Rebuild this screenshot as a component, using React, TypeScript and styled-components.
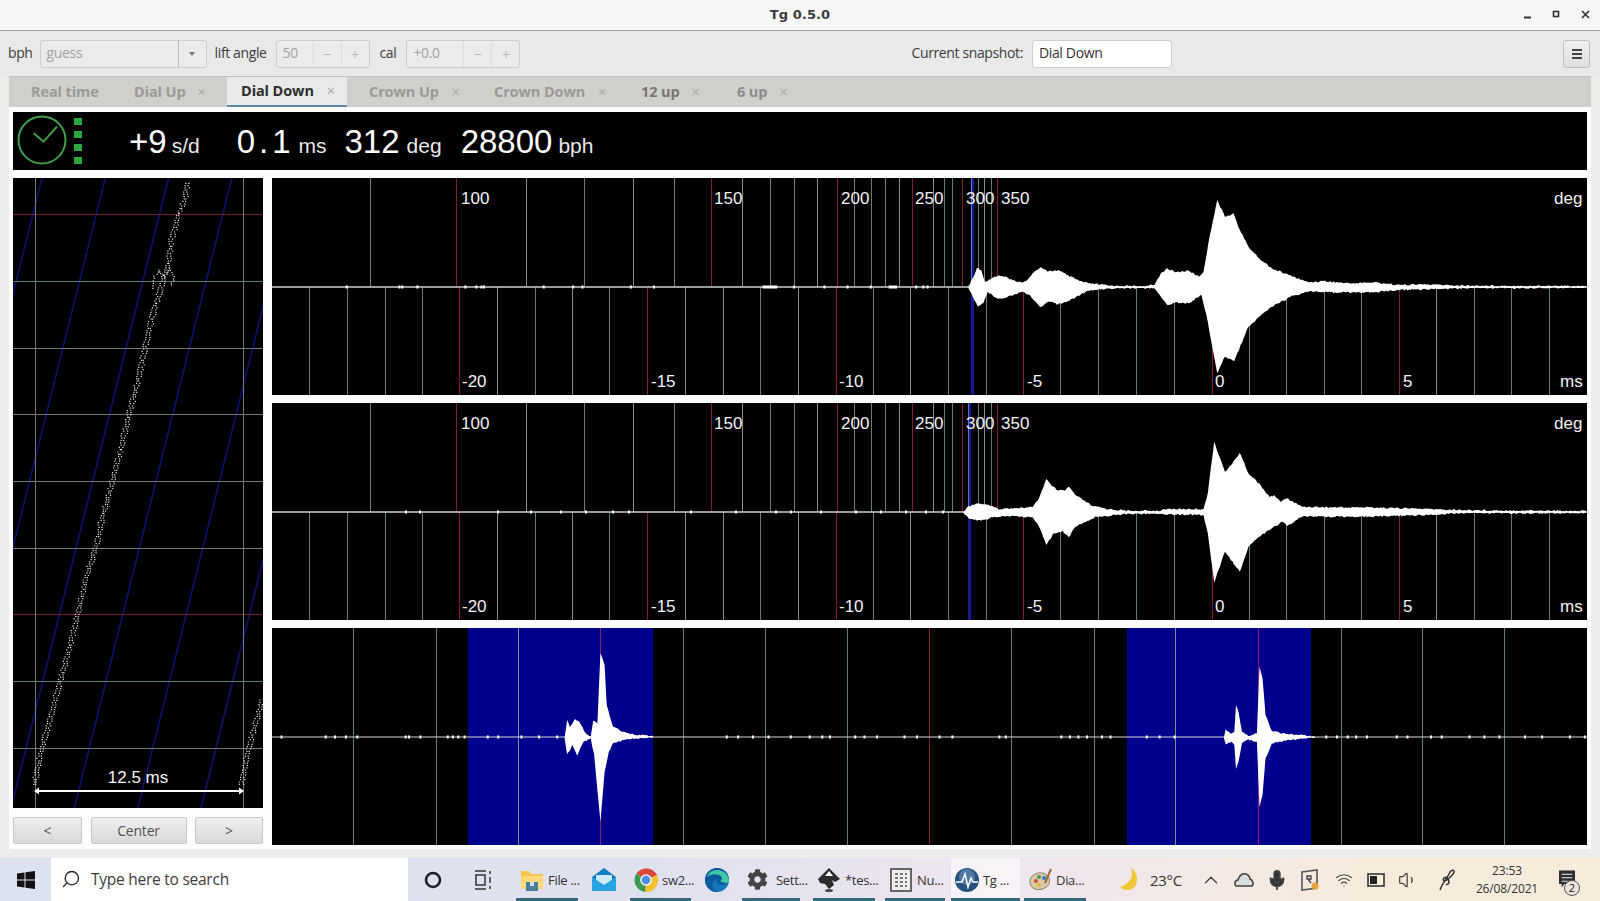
import React from 'react';
import styled, { createGlobalStyle } from 'styled-components';
import { Search, ChevronUp, Mic, Volume1, Wifi } from 'lucide-react';
import { FaCog } from 'react-icons/fa';

const Global = createGlobalStyle`
  html, body { margin: 0; padding: 0; width: 1600px; height: 901px; overflow: hidden; background: #ececec; }
  * { box-sizing: border-box; }
  #root { width: 1600px; height: 901px; }
`;

const UI = `"Open Sans", "Noto Sans", "Liberation Sans", sans-serif`;
const ARIAL = `"Liberation Sans", Arial, sans-serif`;

const Shell = styled.div`
  width: 1600px; height: 901px; display: flex; flex-direction: column;
  background: #ececec; font-family: ${UI}; overflow: hidden;
`;
const TitleBar = styled.header`
  height: 31px; flex: none; display: grid; grid-template-columns: 1fr auto 1fr; align-items: center;
  background: #f6f6f6; border-bottom: 1px solid #a3a3a3; padding-bottom: 1px;
`;
const Title = styled.div`
  grid-column: 2; font: bold 13px "DejaVu Sans", sans-serif; color: #3c3c3c; letter-spacing: .1px;
`;
const WinControls = styled.div`
  grid-column: 3; justify-self: end; display: flex; align-items: center; gap: 20px; padding-right: 10px;
`;
const WinGlyph = styled.svg`
  width: 9px; height: 9px; display: block; stroke: #333; fill: none; stroke-width: 1.6;
`;

const Toolbar = styled.div`
  height: 45px; flex: none; display: flex; align-items: center; padding: 0 10px 0 8px; background: #e9e9e9;
  font-size: 14px; color: #3d3d3d;
`;
const Label = styled.span<{ $ml?: number }>`
  margin-left: ${p => p.$ml ?? 0}px; margin-bottom: 2px; letter-spacing: -.38px; white-space: nowrap;
`;
const Spacer = styled.div`flex: 1;`;
const Control = styled.div<{ $w: number; $ml: number; $bg?: string }>`
  width: ${p => p.$w}px; height: 28px; margin-left: ${p => p.$ml}px; display: flex; align-items: stretch;
  border: 1px solid #cdcdcd; border-radius: 3px; background: ${p => p.$bg ?? '#ebebeb'};
`;
const FieldText = styled.span<{ $dim?: boolean }>`
  flex: 1; display: flex; align-items: center; padding: 0 0 2px 6px; letter-spacing: -.35px;
  color: ${p => (p.$dim ? '#a2a2a2' : '#333')};
`;
const SpinButton = styled.span`
  width: 28px; flex: none; border-left: 1px solid #dcdcdc; display: flex; align-items: center; justify-content: center;
  color: #b9b9b9; font-size: 15px;
`;
const ComboArrow = styled.span`
  width: 28px; flex: none; border-left: 1px solid #bcbcbc; display: flex; align-items: center; justify-content: center;
  &::after { content: ''; border: 3.5px solid transparent; border-top: 4px solid #777; margin-top: 4px; }
`;
const MenuButton = styled.button`
  width: 27px; height: 28px; padding: 0; display: flex; align-items: center; justify-content: center;
  border: 1px solid #c0c0c0; border-radius: 3px; background: linear-gradient(#f0f0f0, #dedede);
`;
const Bars = styled.span`
  width: 10px; height: 10px; display: block;
  border-top: 2px solid #444; border-bottom: 2px solid #444; position: relative;
  &::after { content: ''; position: absolute; left: 0; right: 0; top: 2px; height: 2px; background: #444; }
`;

const Notebook = styled.section`
  margin: 0 9px; flex: none; display: flex; flex-direction: column;
`;
const TabBar = styled.nav`
  height: 31px; display: flex; align-items: stretch; padding-left: 8px; background: #cfcfcb;
  border-top: 1px solid #c0c0bc;
`;
const Tab = styled.div<{ $w: number; $active?: boolean; $tone?: string; $ml?: number }>`
  width: ${p => p.$w}px; margin-left: ${p => p.$ml ?? 0}px; display: flex; align-items: center; padding: 0 0 1px 14px; white-space: nowrap;
  font: 700 14.5px ${UI}; letter-spacing: -.1px;
  color: ${p => (p.$active ? '#2e2e2e' : p.$tone ?? '#9a9a97')};
  background: ${p => (p.$active ? '#e9e9e9' : 'transparent')};
  border-bottom: ${p => (p.$active ? '2px solid #5c86ad' : '0')};
`;
const Close = styled.span<{ $ml: number }>`
  margin-left: ${p => p.$ml}px; font-weight: 400; font-size: 14px; color: #a9a9a6;
`;
const Page = styled.div`
  height: 742px; background: #fdfdfd; padding: 5px 4px 4px 4px; display: flex; flex-direction: column;
`;
const Readout = styled.div`
  height: 58px; flex: none; background: #000; display: flex; align-items: center; color: #fff; font-family: ${ARIAL};
  position: relative;
`;
const ClockIcon = styled.svg`
  width: 52px; height: 52px; flex: none; margin: -2px 0 0 3px; display: block;
`;
const Leds = styled.div`
  margin-left: 6px; display: flex; flex-direction: column; gap: 6px; flex: none;
`;
const Led = styled.span`
  width: 8px; height: 7px; display: block; background: #2aa840;
`;
const Values = styled.div`
  display: flex; align-items: baseline; margin-left: 47px; margin-top: 1px;
`;
const Big = styled.span<{ $ml?: number; $sp?: number }>`
  font-size: 33px; margin-left: ${p => p.$ml ?? 0}px; letter-spacing: ${p => p.$sp ?? 0}px; color: #fff;
`;
const Unit = styled.span<{ $ml?: number }>`
  font-size: 21px; margin-left: ${p => p.$ml ?? 5}px; color: #e8e8e8;
`;

const Body = styled.div`
  margin-top: 8px; height: 667px; flex: none; display: flex; gap: 9px;
`;
const LeftCol = styled.div`
  width: 250px; flex: none; display: flex; flex-direction: column; gap: 9px;
`;
const Strip = styled.svg`
  width: 250px; height: 630px; display: block; background: #000; flex: none;
`;
const NavRow = styled.div`
  display: flex; justify-content: space-between; height: 27px;
`;
const NavButton = styled.button<{ $w: number }>`
  width: ${p => p.$w}px; height: 27px; padding: 0; border: 1px solid #c8c8c8; border-radius: 2px;
  background: linear-gradient(#efefef, #d9d9d9); font: 14px ${UI}; color: #555; letter-spacing: -.2px;
`;
const Scopes = styled.div`
  flex: 1; display: flex; flex-direction: column; gap: 8px;
`;
const ScopeSvg = styled.svg`
  width: 1315px; height: 217px; display: block; background: #000;
`;
const AxisText = styled.text`
  font: 17px ${ARIAL}; fill: #f2f2f2;
`;
const StripText = styled.text`
  font: 17px ${ARIAL}; fill: #f2f2f2; text-anchor: middle;
`;

const Filler = styled.div`flex: 1; background: #ececec;`;

const Taskbar = styled.footer`
  height: 43px; flex: none; display: flex; align-items: stretch;
  background: linear-gradient(90deg, #dce2ef 0%, #e0e1ef 40%, #efe6ee 65%, #f7ebdc 85%, #f7ebdb 100%);
  font-family: ${UI}; font-size: 13.5px; color: #333;
`;
const StartSlot = styled.div`
  width: 51px; flex: none; display: flex; align-items: center; justify-content: center;
`;
const SearchBox = styled.div`
  width: 357px; flex: none; background: #fff; display: flex; align-items: center; padding: 0 0 2px 10px; gap: 10px;
  font-size: 15.5px; color: #3c3c3c; letter-spacing: -.25px;
`;
const SearchGlyph = styled(Search)`
  transform: scaleX(-1); flex: none;
`;
const IconSlot = styled.div<{ $w: number; $ml?: number }>`
  width: ${p => p.$w}px; margin-left: ${p => p.$ml ?? 0}px; flex: none; display: flex; align-items: center; justify-content: center;
`;
const AppSlot = styled.div<{ $w: number; $ml?: number; $active?: boolean }>`
  width: ${p => p.$w}px; margin-left: ${p => p.$ml ?? 0}px; flex: none; display: flex; align-items: center; justify-content: flex-start;
  padding-left: 3px; gap: 3px; border-bottom: 3px solid #33687d; padding-top: 3px; white-space: nowrap; font-size: 13px; letter-spacing: -.3px;
  background: ${p => (p.$active ? 'rgba(255,255,255,.55)' : 'transparent')};
`;
const AppIcon = styled.svg`
  width: 26px; height: 26px; flex: none; display: block;
`;
const GearIcon = styled(FaCog)`
  margin: 0 5px 0 2px; flex: none; color: #444;
`;
const Tray = styled.div`
  margin-left: auto; display: flex; align-items: stretch; flex: none;
`;
const Weather = styled.div`
  width: 86px; display: flex; align-items: center; padding-left: 10px; gap: 12px; font-size: 15px; letter-spacing: -.3px;
`;
const TrayIcon = styled.div<{ $w?: number }>`
  width: ${p => p.$w ?? 33}px; display: flex; align-items: center; justify-content: center; color: #444;
`;
const Clock = styled.div`
  width: 74px; display: flex; flex-direction: column; align-items: center; justify-content: center; gap: 2px;
  font-size: 12px; line-height: 16px; letter-spacing: -.15px; color: #333;
`;
const Notify = styled.div`
  width: 56px; padding-left: 15px; display: flex; align-items: center; position: relative;
`;
const NoteBadge = styled.span`
  position: absolute; left: 20px; top: 22px; width: 16px; height: 16px; border-radius: 50%;
  border: 1px solid #555; background: #e9e4dc; font-size: 11px; line-height: 14px; text-align: center; color: #222;
`;

/* ---------- chart data ---------- */
type P = [number, number];
type Tick = [number, 'g' | 'w' | 'r'];
const tickColor = { g: '#5f8464', w: '#878c87', r: '#801c2e' };
const stripColor = { g: '#5f7d62', w: '#6f7a70', r: '#702029' };

const angleTicks: Tick[] = [
  [370, 'g'], [456, 'r'], [526, 'w'], [584, 'g'], [633, 'w'], [674, 'g'], [711, 'r'], [742, 'w'], [770, 'g'], [794, 'g'],
  [817, 'w'], [837, 'r'], [854, 'g'], [871, 'g'], [885, 'g'], [899, 'w'], [912, 'r'], [933, 'w'], [944, 'g'], [952, 'g'],
  [962, 'r'], [978, 'g'], [984, 'w'], [991, 'g'], [997, 'r'],
];
const msTicks: Tick[] = [
  [309, 'g'], [347, 'g'], [385, 'g'], [422, 'g'], [459, 'r'], [497, 'w'], [535, 'g'], [572, 'w'], [609, 'g'], [647, 'r'],
  [685, 'w'], [723, 'w'], [760, 'g'], [798, 'w'], [836, 'r'], [873, 'g'], [910, 'w'], [948, 'g'], [986, 'g'], [1023, 'r'],
  [1060, 'g'], [1098, 'g'], [1136, 'g'], [1174, 'g'], [1212, 'r'], [1249, 'g'], [1286, 'g'], [1324, 'g'], [1361, 'g'],
  [1399, 'r'], [1436, 'w'], [1474, 'g'], [1511, 'g'], [1549, 'g'],
];
const pulseTicks: Tick[] = [
  [353, 'g'], [436, 'g'], [518, 'w'], [683, 'g'], [765, 'g'], [847, 'g'], [929, 'r'], [1011, 'g'], [1094, 'g'], [1175, 'w'],
  [1341, 'g'], [1422, 'g'], [1504, 'g'],
];

const top1: P[] = [[90,333],[100,310],[110,278],[120,285],[128,320],[135,318],[150,305],[165,303],[190,312],[205,322],[225,318],[240,295],[258,277],[275,290],[300,285],[320,300],[350,318],[370,325],[420,332],[500,334],[525,330],[540,295],[555,280],[575,292],[605,287],[630,305],[640,290],[655,180],[672,75],[690,125],[710,115],[725,165],[745,215],[770,250],[800,280],[850,305],[885,322],[920,318],[980,325],[1040,322],[1100,330],[1150,328],[1250,332],[1535,333]];
const bot1: P[] = [[90,339],[100,365],[112,395],[125,385],[135,350],[160,372],[190,362],[215,350],[235,362],[258,397],[280,380],[300,388],[340,368],[370,347],[420,340],[500,339],[525,340],[555,390],[575,382],[605,385],[635,360],[650,440],[672,595],[690,545],[712,558],[745,455],[775,420],[800,395],[850,362],[885,350],[920,352],[1040,352],[1100,345],[1250,340],[1535,338]];
const top2: P[] = [[78,336],[90,318],[110,310],[130,313],[150,322],[165,328],[190,324],[240,322],[255,295],[272,237],[285,258],[300,272],[315,272],[325,260],[340,285],[380,318],[420,328],[470,333],[540,332],[555,327],[640,327],[650,280],[665,125],[690,215],[705,195],[725,158],[745,220],[770,250],[795,292],[805,285],[820,305],[835,295],[870,320],[930,322],[1030,322],[1090,324],[1190,328],[1235,330],[1535,333]];
const bot2: P[] = [[78,338],[90,355],[110,362],[130,358],[150,350],[190,348],[240,352],[255,380],[272,435],[290,400],[310,392],[325,412],[340,380],[390,350],[470,341],[540,342],[640,345],[650,400],[665,548],[690,455],[725,515],[745,440],[770,410],[800,385],[825,365],[835,378],[870,350],[930,350],[1030,350],[1090,348],[1190,344],[1235,340],[1535,339]];
const top3a: P[] = [[700,336],[706,285],[712,305],[725,282],[735,290],[750,325],[762,335],[768,287],[778,295],[785,85],[795,120],[800,240],[815,305],[840,320],[870,330],[910,333]];
const bot3a: P[] = [[700,340],[706,388],[712,378],[718,360],[730,392],[745,350],[762,340],[770,388],[785,590],[795,440],[805,380],[815,355],[840,345],[870,340],[910,339]];
const top3b: P[] = [[688,336],[692,313],[702,325],[712,320],[716,240],[722,260],[730,320],[745,333],[765,325],[771,125],[778,160],[785,270],[800,318],[830,325],[860,330],[900,334]];
const bot3b: P[] = [[688,340],[692,358],[705,350],[712,360],[716,432],[722,410],[730,355],[745,343],[765,350],[771,547],[778,510],[785,400],[800,355],[830,347],[860,342],[900,339]];

const rightX = (v: number) => 930 + v / 2.34;
const leftX = (v: number) => 270 + v / 2.376;

const rnd = (n: number) => { const s = Math.sin(n * 12.9898) * 43758.5453; return s - Math.floor(s); };

/* one side of an envelope, with a fine ripple between the measured points */
function rippled(pts: P[], fx: (v: number) => number, y0: number, seed: number) {
  const out: string[] = [];
  let n = seed;
  for (let i = 0; i < pts.length - 1; i++) {
    const ax = fx(pts[i][0]); const bx = fx(pts[i + 1][0]);
    const ay = y0 + pts[i][1] / 3; const by = y0 + pts[i + 1][1] / 3;
    const steps = Math.max(1, Math.round((bx - ax) / 1.5));
    for (let k = 0; k < steps; k++) {
      const t = k / steps;
      const wob = k === 0 ? 0 : (rnd(n++) - .5) * 1.7;
      out.push(`${(ax + (bx - ax) * t).toFixed(1)},${(ay + (by - ay) * t + wob).toFixed(1)}`);
    }
  }
  const last = pts[pts.length - 1];
  out.push(`${fx(last[0]).toFixed(1)},${(y0 + last[1] / 3).toFixed(1)}`);
  return out;
}
const poly = (top: P[], bot: P[], fx: (v: number) => number, y0: number) =>
  [...rippled(top, fx, y0, 11), ...rippled(bot, fx, y0, 577).reverse()].join(' ');

const dots1 = [180, 305, 312, 348, 462, 488, 500, 506, 648, 718, 740, 855, 910, 1243, 1315, 1370, 1425, 1533, 1550, 1560].map(leftX);
const wide1: P[] = [[1170, 1205], [1470, 1490]];
const dots2 = [405, 419, 497, 530, 560, 585, 612, 628, 690, 735, 775, 790, 820, 855, 880, 905, 925, 942];
const dots3 = [25, 130, 152, 178, 205, 320, 328, 355, 420, 432, 445, 460, 515, 540, 595, 637, 680, 1083, 1110, 1145, 1182, 1235, 1280, 1310, 1328, 1388, 1410, 1440, 1505, 1535].map(leftX);
const dots3b = [20, 50, 160, 175, 305, 325, 345, 365, 400, 420, 505, 535, 570, 925, 950, 975, 995, 1020, 1090, 1115, 1170, 1195, 1260, 1295, 1330, 1390, 1430, 1495, 1530].map(rightX);

const upper = [
  ['100', 461], ['150', 714], ['200', 841], ['250', 915], ['300', 966], ['350', 1001],
] as const;
const lower = [
  ['-20', 462], ['-15', 651], ['-10', 839], ['-5', 1027], ['0', 1215], ['5', 1403],
] as const;

function TimeScope({ y0, top, bot, blue, dots, wide }: { y0: number; top: P[]; bot: P[]; blue: number; dots: number[]; wide?: P[] }) {
  const mid = y0 + 109;
  const end = y0 + 217;
  return (
    <ScopeSvg viewBox={`272 ${y0} 1315 217`}>
      {angleTicks.map(([x, c]) => <line key={x} x1={x + .5} x2={x + .5} y1={y0} y2={mid} stroke={tickColor[c]} />)}
      {msTicks.map(([x, c]) => <line key={x} x1={x + .5} x2={x + .5} y1={mid} y2={end} stroke={tickColor[c]} />)}
      <rect x={blue} y={y0} width={3} height={217} fill="#16169c" />
      <line x1={blue + .5} x2={blue + .5} y1={y0} y2={mid} stroke="#5478c4" />
      <line x1={272} x2={1587} y1={mid} y2={mid} stroke="#cfcfcf" strokeWidth={1.4} />
      {dots.map(x => <rect key={x} x={x} y={mid - 1.5} width={2} height={3} fill="#fff" />)}
      {wide?.map(([a, b]) => <rect key={a} x={leftX(a)} y={mid - 1.5} width={(b - a) / 2.376} height={3} fill="#fff" />)}
      <polygon points={poly(top, bot, rightX, y0 - 3)} fill="#fff" />
      {upper.map(([t, x]) => <AxisText key={t} x={x} y={y0 + 26}>{t}</AxisText>)}
      <AxisText x={1554} y={y0 + 26}>deg</AxisText>
      {lower.map(([t, x]) => <AxisText key={t} x={x} y={y0 + 209}>{t}</AxisText>)}
      <AxisText x={1560} y={y0 + 209}>ms</AxisText>
    </ScopeSvg>
  );
}

function PulseScope() {
  const y0 = 628;
  const mid = 737;
  return (
    <ScopeSvg viewBox="272 628 1315 217">
      <rect x={468} y={y0} width={185} height={217} fill="#00008c" />
      <rect x={1127} y={y0} width={184} height={217} fill="#00008c" />
      {pulseTicks.map(([x, c]) => <line key={x} x1={x + .5} x2={x + .5} y1={y0} y2={y0 + 217} stroke={tickColor[c]} />)}
      <line x1={600.5} x2={600.5} y1={y0} y2={y0 + 217} stroke="#8a1f6a" />
      <line x1={1258.5} x2={1258.5} y1={y0} y2={y0 + 217} stroke="#8a1f6a" />
      <line x1={272} x2={1587} y1={mid} y2={mid} stroke="#d6d6d6" strokeWidth={1.2} />
      {[...dots3, ...dots3b].map(x => <rect key={x} x={x} y={mid - 1.5} width={2} height={3} fill="#fff" />)}
      <polygon points={poly(top3a, bot3a, leftX, 625)} fill="#fff" />
      <polygon points={poly(top3b, bot3b, rightX, 625)} fill="#fff" />
    </ScopeSvg>
  );
}

const trace: P[] = [[560,40],[555,80],[535,130],[515,200],[503,280],[490,320],[480,360],[460,420],[435,530],[410,640],[385,735],[355,860],[335,935],[315,1010],[308,1030],[285,1135],[255,1230],[240,1300],[225,1360],[205,1440],[178,1535],[150,1640],[125,1730],[100,1850]];
const trace2: P[] = [[785,1590],[765,1660],[745,1730],[720,1850]];
const knot: P[] = [[455,355],[460,325],[475,300],[490,322],[505,295],[522,320],[512,352]];

function dotted(pts: P[], off: number, seed: number, jitter = 1.3) {
  let d = '';
  let n = seed;
  for (let i = 0; i < pts.length - 1; i++) {
    const [ax, ay] = pts[i];
    const [bx, by] = pts[i + 1];
    const len = Math.hypot(bx - ax, by - ay) / 3;
    const steps = Math.max(1, Math.round(len / 2.4));
    for (let k = 0; k < steps; k++) {
      const t = k / steps;
      const x = (ax + (bx - ax) * t) / 3 + off + (rnd(n++) - .5) * jitter * 2;
      const y = 170 + (ay + (by - ay) * t) / 3;
      d += `M${x.toFixed(1)} ${y.toFixed(1)}h1.2`;
    }
  }
  return d;
}
const hLines: Tick[] = [[214, 'r'], [281, 'g'], [348, 'w'], [414, 'w'], [481, 'w'], [548, 'w'], [614, 'r'], [681, 'g'], [748, 'w']];

function PaperStrip() {
  const blues = [-3, -2, -1, 0, 1, 2, 3, 4, 5, 6, 7];
  return (
    <Strip viewBox="13 178 250 630">
      {blues.map(k => {
        const x214 = 33 + 63.3 * k;
        return <line key={k} x1={x214 + 36 * 0.25} y1={178} x2={x214 - 594 * 0.25} y2={808} stroke="#10106c" strokeWidth={1.6} />;
      })}
      {hLines.map(([y, c]) => <line key={y} x1={13} x2={263} y1={y + .5} y2={y + .5} stroke={stripColor[c]} />)}
      <line x1={35.5} x2={35.5} y1={178} y2={808} stroke={stripColor.w} />
      <line x1={243.5} x2={243.5} y1={178} y2={808} stroke={stripColor.w} />
      <path d={dotted(trace, -1.6, 3) + dotted(trace, 1.6, 99) + dotted(trace2, -1.6, 201) + dotted(trace2, 1.6, 301) + dotted(knot, 0, 401)} stroke="#e6e6e6" strokeWidth={1.2} fill="none" />
      <StripText x={138} y={783}>12.5 ms</StripText>
      <line x1={37} x2={241} y1={791} y2={791} stroke="#fff" strokeWidth={2} />
      <path d="M34 791l5-3.5v7zM244 791l-5-3.5v7z" fill="#fff" />
    </Strip>
  );
}

/* ---------- taskbar icons ---------- */
const WindowsLogo = () => (
  <svg width="18" height="18" viewBox="0 0 18 18"><path d="M0 2.5L7.5 1.4V8.4H0ZM8.5 1.2L18 0V8.4H8.5ZM0 9.4H7.5V16.5L0 15.4ZM8.5 9.4H18V18L8.5 16.7Z" fill="#111" /></svg>
);
const CortanaRing = () => (
  <svg width="18" height="18" viewBox="0 0 18 18"><circle cx="9" cy="9" r="7" fill="none" stroke="#222" strokeWidth="2.6" /></svg>
);
const TaskView = () => (
  <svg width="20" height="22" viewBox="0 0 20 22" fill="none" stroke="#333" strokeWidth="1.5">
    <path d="M2 2h11M2 20h11" /><rect x="3" y="6" width="9" height="10" /><path d="M17 2v3M17 8v6M17 17v3" />
  </svg>
);
const FolderIcon = () => (
  <AppIcon viewBox="0 0 26 26"><path d="M2 4h8l2 3h12v15H2z" fill="#f5c64f" /><rect x="2" y="9" width="22" height="13" fill="#fbd878" /><rect x="7" y="15" width="12" height="9" fill="#4b7d9c" /><rect x="11" y="15" width="4" height="4" fill="#cfe0ea" /></AppIcon>
);
const MailIcon = () => (
  <AppIcon viewBox="0 0 26 26"><path d="M13 1L25 10V24H1V10Z" fill="#0f7fc4" /><path d="M5 8H21V15L13 20L5 15Z" fill="#cfeaf8" /><path d="M1 10L13 18L25 10V24H1Z" fill="#27a4df" /></AppIcon>
);
const ChromeIcon = () => (
  <AppIcon viewBox="0 0 26 26">
    <path d="M13 13L3.5 6.5A12 12 0 0 1 24 8Z" fill="#d9483b" /><path d="M13 13L24 8A12 12 0 0 1 12 25Z" fill="#f3c12f" /><path d="M13 13L12 25A12 12 0 0 1 3.5 6.5Z" fill="#3b9a50" />
    <circle cx="13" cy="13" r="5.8" fill="#fff" /><circle cx="13" cy="13" r="4.4" fill="#4d8fe0" />
  </AppIcon>
);
const EdgeIcon = () => (
  <AppIcon viewBox="0 0 26 26">
    <circle cx="13" cy="13" r="12" fill="#1578bd" />
    <path d="M1 13A12 12 0 0 1 25 13C25 16 22 18 18 18C13 18 12 15 13 12C9 13 7 17 9 21C10 23 12 25 15 24.8A12 12 0 0 1 1 13Z" fill="#0c5b9c" />
    <path d="M25 14C25 8 20 3 13 3C8 3 4 6 3 10C6 7 11 6.5 15 8C19 9.6 19 13 16 14C19 16 25 17 25 14Z" fill="#3fc6a5" />
  </AppIcon>
);
const InkscapeIcon = () => (
  <AppIcon viewBox="0 0 26 26"><path d="M13 1L24 12L19 15L16 13L18 18L13 22L9 17L4 16L2 12Z" fill="#2c2c2c" /><path d="M13 4L17 9H9Z" fill="#fff" /><ellipse cx="13" cy="23.5" rx="4" ry="1.5" fill="#444" /></AppIcon>
);
const KeypadIcon = () => (
  <AppIcon viewBox="0 0 26 26">
    <rect x="3" y="2" width="20" height="22" fill="#eee" stroke="#666" strokeWidth="2" />
    <path d="M7 7h3M12 7h3M17 7h2M7 11h3M12 11h3M17 11h2M7 15h3M12 15h3M17 15h2M7 19h3M12 19h3M17 19h2" stroke="#777" strokeWidth="2" />
  </AppIcon>
);
const TgIcon = () => (
  <AppIcon viewBox="0 0 26 26"><circle cx="13" cy="13" r="12" fill="#27517f" /><circle cx="13" cy="10" r="8" fill="#6d93bd" opacity=".6" /><path d="M2 15H8L11 7L14 20L17 11L19 15H24" fill="none" stroke="#fff" strokeWidth="1.5" /></AppIcon>
);
const PaletteIcon = () => (
  <AppIcon viewBox="0 0 26 26">
    <path d="M3 16C2 9 9 5 15 6C21 7 24 12 22 17C20 21 13 24 8 22C5 21 3.5 19 3 16Z" fill="#d8c9a8" stroke="#8d8066" />
    <circle cx="9" cy="14" r="2" fill="#d94b3c" /><circle cx="12" cy="10" r="2" fill="#4a9b52" /><circle cx="17" cy="11" r="2" fill="#3c78c8" /><circle cx="12" cy="18" r="2" fill="#e6b93c" />
    <path d="M18 16L24 2" stroke="#9a6a3a" strokeWidth="2" />
  </AppIcon>
);
const MoonIcon = () => (
  <svg width="20" height="24" viewBox="0 0 20 24"><path d="M13 0C15 7 14 15 2 19C7 24 18 23 19 13C19.500 7 17 2 13 0Z" fill="#f0c63a" /></svg>
);
const CloudIcon = () => (
  <svg width="20" height="18" viewBox="0 0 20 18"><path d="M2 15C0 13 1 9 4 9C5 4 9 2 12 3C15 4 16 7 16 8C19 9 20 13 18 15Z" fill="#ddd" stroke="#444" strokeWidth="1.6" /></svg>
);
const MicGlyph = () => <Mic size={22} fill="#333" strokeWidth={2} />;
const SecurityIcon = () => (
  <svg width="22" height="22" viewBox="0 0 22 22"><path d="M3 3L18 1V19L3 21Z" fill="none" stroke="#555" strokeWidth="1.6" /><path d="M8 7h4v3H8zM9 10l3 4" fill="none" stroke="#444" strokeWidth="1.4" /><circle cx="16" cy="17" r="3.5" fill="#e8a33c" /></svg>
);
const BatteryIcon = () => (
  <svg width="18" height="14" viewBox="0 0 18 14"><rect x="1" y="1" width="16" height="12" fill="none" stroke="#333" strokeWidth="1.6" /><rect x="3" y="3" width="7" height="8" fill="#222" /></svg>
);
const PenIcon = () => (
  <svg width="20" height="24" viewBox="0 0 20 24" fill="none" stroke="#333" strokeWidth="1.5"><path d="M3 22C5 15 9 12 12 6C13 3 16 1 17 3C18 6 13 9 10 12C7 14 5 12 7 10C9 8 12 11 12 14C12 16 10 17 9 16" /></svg>
);
const NoteIcon = () => (
  <svg width="16" height="19" viewBox="0 0 18 20"><path d="M0 0H18V15H6L3 19V15H0Z" fill="#2d2d2d" /><path d="M3 4H15M3 8H15M3 12H11" stroke="#eee" strokeWidth="1.2" /></svg>
);

const App = () => (
  <Shell>
    <Global />
    <TitleBar>
      <Title>Tg 0.5.0</Title>
      <WinControls>
        <WinGlyph viewBox="0 0 9 9"><path d="M1 7.500H8" strokeWidth="2" /></WinGlyph>
        <WinGlyph viewBox="0 0 9 9"><rect x="1.500" y="1.500" width="5" height="5" /></WinGlyph>
        <WinGlyph viewBox="0 0 9 9"><path d="M1 1L8 8M8 1L1 8" /></WinGlyph>
      </WinControls>
    </TitleBar>

    <Toolbar>
      <Label>bph</Label>
      <Control $w={167} $ml={7}><FieldText $dim>guess</FieldText><ComboArrow /></Control>
      <Label $ml={8}>lift angle</Label>
      <Control $w={94} $ml={9}><FieldText $dim>50</FieldText><SpinButton>−</SpinButton><SpinButton>+</SpinButton></Control>
      <Label $ml={10}>cal</Label>
      <Control $w={114} $ml={10}><FieldText $dim>+0.0</FieldText><SpinButton>−</SpinButton><SpinButton>+</SpinButton></Control>
      <Spacer />
      <Label>Current snapshot:</Label>
      <Control $w={140} $ml={9} $bg="#fff"><FieldText>Dial Down</FieldText></Control>
      <Spacer />
      <MenuButton aria-label="menu"><Bars /></MenuButton>
    </Toolbar>

    <Notebook>
      <TabBar>
        <Tab $w={103}>Real time</Tab>
        <Tab $w={107}>Dial Up<Close $ml={12}>×</Close></Tab>
        <Tab $w={120} $active>Dial Down<Close $ml={13}>×</Close></Tab>
        <Tab $w={125} $ml={8}>Crown Up<Close $ml={13}>×</Close></Tab>
        <Tab $w={147}>Crown Down<Close $ml={13}>×</Close></Tab>
        <Tab $w={96} $tone="#777">12 up<Close $ml={12}>×</Close></Tab>
        <Tab $w={77} $tone="#8c8c8a">6 up<Close $ml={12}>×</Close></Tab>
      </TabBar>
      <Page>
        <Readout>
          <ClockIcon viewBox="0 0 52 52">
            <circle cx="26" cy="26" r="23.500" fill="none" stroke="#3f9e4d" strokeWidth="2" />
            <path d="M17.500 19L27.500 27.700L41 12.700" fill="none" stroke="#3f9e4d" strokeWidth="2" />
          </ClockIcon>
          <Leds><Led /><Led /><Led /><Led /></Leds>
          <Values>
            <Big>+9</Big><Unit>s/d</Unit>
            <Big $ml={37} $sp={4}>0.1</Big><Unit $ml={4}>ms</Unit>
            <Big $ml={18}>312</Big><Unit $ml={7}>deg</Unit>
            <Big $ml={19}>28800</Big><Unit $ml={6}>bph</Unit>
          </Values>
        </Readout>
        <Body>
          <LeftCol>
            <PaperStrip />
            <NavRow>
              <NavButton $w={69}>&lt;</NavButton>
              <NavButton $w={96}>Center</NavButton>
              <NavButton $w={68}>&gt;</NavButton>
            </NavRow>
          </LeftCol>
          <Scopes>
            <TimeScope y0={178} top={top1} bot={bot1} blue={971} dots={dots1} wide={wide1} />
            <TimeScope y0={403} top={top2} bot={bot2} blue={968} dots={dots2} />
            <PulseScope />
          </Scopes>
        </Body>
      </Page>
    </Notebook>
    <Filler />

    <Taskbar>
      <StartSlot><WindowsLogo /></StartSlot>
      <SearchBox><SearchGlyph size={20} strokeWidth={1.6} color="#222" />Type here to search</SearchBox>
      <IconSlot $w={50}><CortanaRing /></IconSlot>
      <IconSlot $w={49}><TaskView /></IconSlot>
      <AppSlot $w={62} $ml={9}><FolderIcon />File ...</AppSlot>
      <IconSlot $w={52}><MailIcon /></IconSlot>
      <AppSlot $w={61}><ChromeIcon />sw2...</AppSlot>
      <IconSlot $w={51}><EdgeIcon /></IconSlot>
      <AppSlot $w={58}><GearIcon size={21} />Sett...</AppSlot>
      <AppSlot $w={62} $ml={13}><InkscapeIcon />*tes...</AppSlot>
      <AppSlot $w={60} $ml={10}><KeypadIcon />Nu...</AppSlot>
      <AppSlot $w={69} $ml={6} $active><TgIcon />Tg ...</AppSlot>
      <AppSlot $w={62} $ml={4}><PaletteIcon />Dia...</AppSlot>
      <Tray>
        <Weather><MoonIcon />23°C</Weather>
        <TrayIcon><ChevronUp size={22} strokeWidth={1.5} /></TrayIcon>
        <TrayIcon><CloudIcon /></TrayIcon>
        <TrayIcon><MicGlyph /></TrayIcon>
        <TrayIcon $w={34}><SecurityIcon /></TrayIcon>
        <TrayIcon><Wifi size={18} strokeWidth={1.6} /></TrayIcon>
        <TrayIcon $w={32}><BatteryIcon /></TrayIcon>
        <TrayIcon $w={32}><Volume1 size={20} strokeWidth={1.5} /></TrayIcon>
        <TrayIcon $w={46}><PenIcon /></TrayIcon>
        <Clock><span>23:53</span><span>26/08/2021</span></Clock>
        <Notify><NoteIcon /><NoteBadge>2</NoteBadge></Notify>
      </Tray>
    </Taskbar>
  </Shell>
);

export default App;
